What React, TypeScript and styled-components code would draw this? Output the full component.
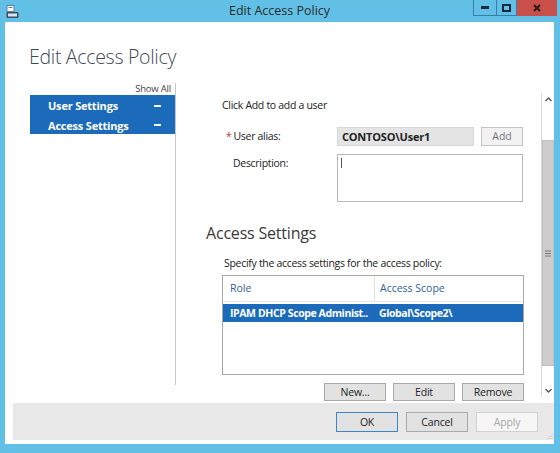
import React from 'react';
import styled, { createGlobalStyle } from 'styled-components';

const GlobalStyle = createGlobalStyle`
    html, body {
        margin: 0;
        padding: 0;
        background: #62c0e6;
    }
    * {
        box-sizing: border-box;
    }
`;

const font = `'Open Sans', 'Noto Sans', 'Liberation Sans', sans-serif`;

const Window = styled.div`
    width: 560px;
    height: 453px;
    display: flex;
    flex-direction: column;
    background: #62c0e6;
    padding: 0 6px 9px 5px;
    font-family: ${font};
    color: #222;
    overflow: hidden;
`;
const TitleBar = styled.div`
    height: 22px;
    flex: none;
    display: grid;
    grid-template-columns: 1fr auto 1fr;
    align-items: start;
`;
const TitleIcon = styled.div`
    padding: 3px 0 0 1px;
    height: 22px;
`;
const Title = styled.div`
    font-size: 12.5px;
    line-height: 22px;
    color: #2b2b2b;
`;
const Controls = styled.div`
    display: flex;
    justify-content: flex-end;
    margin-right: -3px;
`;
const Ctrl = styled.div<{ close?: boolean; w: number }>`
    width: ${({ w }) => w}px;
    height: 16px;
    display: flex;
    align-items: center;
    justify-content: center;
    background: ${({ close }) => (close ? '#c9504a' : 'transparent')};
    border: 1px solid ${({ close }) => (close ? '#c9504a' : '#3a7ea6')};
    border-top: none;
    & + & {
        border-left: none;
    }
`;
const Client = styled.div`
    flex: 1;
    min-height: 0;
    background: #fff;
    display: flex;
    flex-direction: column;
    padding-bottom: 4px;
`;
const Heading = styled.h1`
    margin: 0;
    flex: none;
    padding: 21px 0 0 24px;
    height: 61px;
    font-size: 19.5px;
    font-weight: 300;
    color: #3e4a58;
    letter-spacing: -0.3px;
`;
const Body = styled.div`
    flex: 1;
    display: flex;
    min-height: 0;
    overflow: hidden;
`;
const Nav = styled.div`
    width: 146px;
    margin-left: 25px;
    border-right: 1px solid #c8c8c8;
    margin-bottom: 18px;
    display: flex;
    flex-direction: column;
`;
const ShowAll = styled.div`
    font-size: 9.5px;
    text-align: right;
    color: #444;
    padding: 0 4px 0 0;
    height: 12px;
    line-height: 12px;
    letter-spacing: -0.2px;
`;
const NavItem = styled.div`
    height: 20px;
    background: #1c6bbb;
    color: #fff;
    font-weight: 700;
    font-size: 11px;
    display: flex;
    align-items: center;
    justify-content: space-between;
    padding: 0 14px 0 18px;
    border-top: 1px solid #1c6bbb;
    letter-spacing: -0.2px;
    & + & {
        height: 19px;
    }
`;
const Dash = styled.span`
    width: 7px;
    height: 2px;
    background: #fff;
`;
const Content = styled.div`
    flex: 1;
    padding: 15px 17px 0 46px;
    display: flex;
    flex-direction: column;
    font-size: 10.5px;
`;
const Note = styled.div`
    height: 15px;
    line-height: 15px;
    letter-spacing: -0.3px;
    margin-bottom: 14px;
`;
const FormRow = styled.div<{ indent: number }>`
    display: flex;
    align-items: flex-start;
    padding-left: ${({ indent }) => indent}px;
    margin-bottom: 8px;
`;
const Label = styled.div<{ w: number }>`
    width: ${({ w }) => w}px;
    line-height: 19px;
    letter-spacing: -0.3px;
    color: #222;
`;
const Required = styled.span`
    color: #d03030;
    margin-right: 2px;
`;
const AliasBox = styled.div`
    width: 137px;
    height: 19px;
    background: #e4e4e4;
    border: 1px solid #d8d8d8;
    font-weight: 700;
    font-size: 11px;
    line-height: 17px;
    padding-left: 4px;
    letter-spacing: -0.2px;
`;
const SmallButton = styled.div`
    margin-left: 7px;
    width: 42px;
    height: 19px;
    background: #f2f2f2;
    border: 1px solid #c4c4c4;
    color: #777;
    text-align: center;
    line-height: 17px;
`;
const TextBox = styled.div`
    width: 186px;
    height: 48px;
    border: 1px solid #b8b8b8;
    padding: 3px 0 0 3px;
`;
const Caret = styled.div`
    width: 1px;
    height: 10px;
    background: #555;
`;
const SectionTitle = styled.div`
    margin: 13px 0 0 -16px;
    font-size: 16px;
    color: #3a3a3a;
    height: 21px;
    line-height: 21px;
    letter-spacing: -0.2px;
`;
const Specify = styled.div`
    margin: 12px 0 0 2px;
    height: 14px;
    line-height: 14px;
    letter-spacing: -0.3px;
`;
const Table = styled.div`
    margin-top: 5px;
    height: 100px;
    flex: none;
    border: 1px solid #a8a8a8;
    display: flex;
    flex-direction: column;
`;
const HeadRow = styled.div`
    display: grid;
    grid-template-columns: 151px 1fr;
    height: 26px;
    border-bottom: 1px solid #eaeaea;
`;
const HeadCell = styled.div`
    color: #2f5f9a;
    padding: 5px 0 0 7px;
    & + & {
        border-left: 1px solid #e2e2e2;
        padding-left: 5px;
    }
`;
const DataRow = styled.div`
    margin-top: 2px;
    display: grid;
    grid-template-columns: 152px 1fr;
    height: 18px;
    background: #1c6bbb;
    color: #fff;
    font-weight: 700;
    line-height: 18px;
    letter-spacing: -0.4px;
`;
const DataCell = styled.div`
    padding-left: 7px;
    white-space: nowrap;
    overflow: hidden;
    & + & {
        padding-left: 4px;
    }
`;
const ButtonRow = styled.div<{ gap: number }>`
    display: flex;
    justify-content: flex-end;
    gap: ${({ gap }) => gap}px;
    margin-top: 8px;
`;
const Button = styled.div<{ kind?: 'default' | 'disabled' }>`
    width: 62px;
    height: 18px;
    background: ${({ kind }) => (kind === 'disabled' ? '#f6f6f6' : '#e2e2e2')};
    border: 1px solid
        ${({ kind }) =>
            kind === 'default' ? '#3c86c4' : kind === 'disabled' ? '#d2d2d2' : '#a9a9a9'};
    color: ${({ kind }) => (kind === 'disabled' ? '#a6a6a6' : '#222')};
    text-align: center;
    line-height: 16px;
    font-size: 10.5px;
    letter-spacing: -0.2px;
`;
const FooterButton = styled(Button)`
    height: 20px;
    line-height: 18px;
`;
const Scrollbar = styled.div`
    width: 13px;
    margin: 10px 0 6px;
    border-left: 1px solid #d6d6d6;
    display: flex;
    flex-direction: column;
`;
const Arrow = styled.div`
    height: 13px;
    flex: none;
    display: flex;
    align-items: center;
    justify-content: center;
`;
const Track = styled.div<{ h: number }>`
    height: ${({ h }) => h}px;
    flex: none;
`;
const Thumb = styled.div`
    flex: 1;
    background: #cdcdcd;
    border: 1px solid #c0c0c0;
    display: flex;
    align-items: center;
    justify-content: center;
`;
const Footer = styled.div`
    margin-left: 8px;
    height: 37px;
    flex: none;
    background: #e8e8e8;
    display: flex;
    justify-content: flex-end;
    align-items: center;
    gap: 8px;
    padding-right: 16px;
    position: relative;
`;
const Grip = styled.svg`
    position: absolute;
    right: 1px;
    bottom: 1px;
`;

const Chevron = ({ up }: { up?: boolean }) => (
    <svg width="7" height="5" viewBox="0 0 7 5">
        <path
            d={up ? 'M0.5 4 L3.5 1 L6.5 4' : 'M0.5 1 L3.5 4 L6.5 1'}
            fill="none"
            stroke="#555"
            strokeWidth="1.3"
        />
    </svg>
);

const AppIcon = () => (
    <svg width="13" height="15" viewBox="0 0 13 15">
        <rect x="1" y="0.5" width="7" height="6" fill="#fff" stroke="#5a7fa8" />
        <rect x="2.5" y="2" width="4" height="1" fill="#5a7fa8" />
        <rect x="0.5" y="7" width="12" height="6" rx="1" fill="#3c4f66" />
        <rect x="2" y="8.5" width="9" height="3" fill="#d7e3ee" />
    </svg>
);

export default function App() {
    return (
        <>
            <GlobalStyle />
            <Window>
                <TitleBar>
                    <TitleIcon>
                        <AppIcon />
                    </TitleIcon>
                    <Title>Edit Access Policy</Title>
                    <Controls>
                        <Ctrl w={24}>
                            <svg width="8" height="3">
                                <rect width="8" height="3" fill="#1a2a38" />
                            </svg>
                        </Ctrl>
                        <Ctrl w={20}>
                            <svg width="9" height="8">
                                <rect x="1" y="1" width="7" height="6" fill="none" stroke="#1a2a38" strokeWidth="2" />
                            </svg>
                        </Ctrl>
                        <Ctrl w={40} close>
                            <svg width="8" height="8">
                                <path d="M1 1 L7 7 M7 1 L1 7" stroke="#2a1a1a" strokeWidth="2" />
                            </svg>
                        </Ctrl>
                    </Controls>
                </TitleBar>
                <Client>
                    <Heading>Edit Access Policy</Heading>
                    <Body>
                        <Nav>
                            <ShowAll>Show All</ShowAll>
                            <NavItem>
                                User Settings <Dash />
                            </NavItem>
                            <NavItem>
                                Access Settings <Dash />
                            </NavItem>
                        </Nav>
                        <Content>
                            <Note>Click Add to add a user</Note>
                            <FormRow indent={4}>
                                <Label w={111}>
                                    <Required>*</Required>User alias:
                                </Label>
                                <AliasBox>CONTOSO\User1</AliasBox>
                                <SmallButton>Add</SmallButton>
                            </FormRow>
                            <FormRow indent={11}>
                                <Label w={104}>Description:</Label>
                                <TextBox>
                                    <Caret />
                                </TextBox>
                            </FormRow>
                            <SectionTitle>Access Settings</SectionTitle>
                            <Specify>Specify the access settings for the access policy:</Specify>
                            <Table>
                                <HeadRow>
                                    <HeadCell>Role</HeadCell>
                                    <HeadCell>Access Scope</HeadCell>
                                </HeadRow>
                                <DataRow>
                                    <DataCell>IPAM DHCP Scope Administ..</DataCell>
                                    <DataCell>Global\Scope2\</DataCell>
                                </DataRow>
                            </Table>
                            <ButtonRow gap={7}>
                                <Button>New...</Button>
                                <Button>Edit</Button>
                                <Button>Remove</Button>
                            </ButtonRow>
                        </Content>
                        <Scrollbar>
                            <Arrow>
                                <Chevron up />
                            </Arrow>
                            <Track h={34} />
                            <Thumb>
                                <svg width="6" height="7">
                                    <path d="M0 1 H6 M0 3.5 H6 M0 6 H6" stroke="#777" />
                                </svg>
                            </Thumb>
                            <Track h={18} />
                            <Arrow>
                                <Chevron />
                            </Arrow>
                        </Scrollbar>
                    </Body>
                    <Footer>
                        <FooterButton kind="default">OK</FooterButton>
                        <FooterButton>Cancel</FooterButton>
                        <FooterButton kind="disabled">Apply</FooterButton>
                        <Grip width="6" height="6" viewBox="0 0 6 6">
                            <path d="M5 1 V1.5 M3 3 V3.5 M5 3 V3.5 M1 5 V5.5 M3 5 V5.5 M5 5 V5.5" stroke="#999" />
                        </Grip>
                    </Footer>
                </Client>
            </Window>
        </>
    );
}
